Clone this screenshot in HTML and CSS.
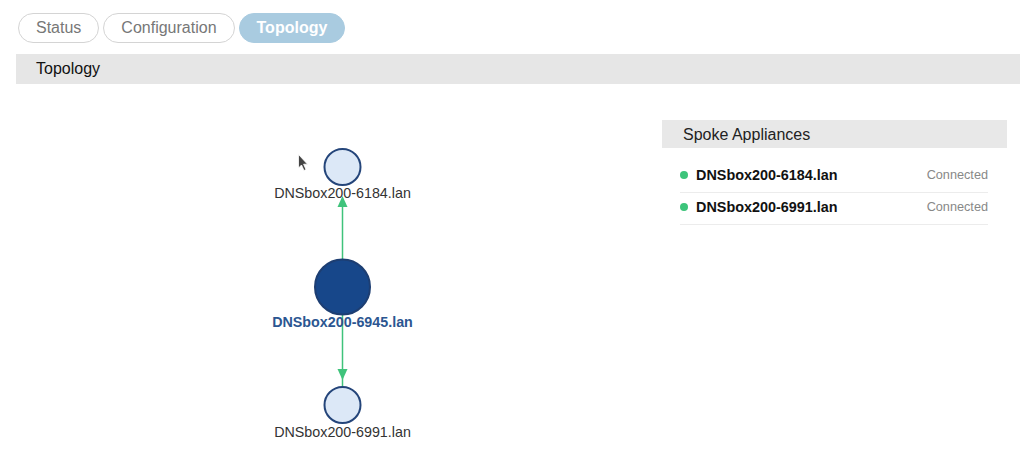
FILE: index.html
```
<!DOCTYPE html>
<html>
<head>
<meta charset="utf-8">
<title>Topology</title>
<link rel="stylesheet" href="styles.css">
</head>
<body>
<div class="page">
  <nav class="tabs">
    <span class="tab">Status</span>
    <span class="tab">Configuration</span>
    <span class="tab active">Topology</span>
  </nav>
  <div class="section-title">Topology</div>
  <div class="content">
    <div class="graph">
      <svg class="graph-svg" width="646" height="373" viewBox="0 0 646 373" xmlns="http://www.w3.org/2000/svg">
        <g class="edges">
          <line x1="326.5" y1="176" x2="326.5" y2="122" class="edge"/>
          <polygon points="326.5,112 321.5,123 331.5,123" class="arrow"/>
          <line x1="326.5" y1="230" x2="326.5" y2="302" class="edge"/>
          <polygon points="326.5,296 321.5,285 331.5,285" class="arrow"/>
        </g>
        <circle cx="326.5" cy="83" r="18" class="node"/>
        <text x="326.5" y="114" class="label">DNSbox200-6184.lan</text>
        <circle cx="326.5" cy="203" r="27.5" class="node hub"/>
        <text x="326.5" y="243" class="label hub-label">DNSbox200-6945.lan</text>
        <circle cx="326.5" cy="321" r="18" class="node"/>
        <text x="326.5" y="353" class="label">DNSbox200-6991.lan</text>
        <path class="cursor" d="M282.5 70.5 L282.5 84 L285.5 81 L288 86.5 L290 85.6 L287.6 80.2 L291.5 80.2 Z"/>
      </svg>
    </div>
    <aside class="spoke">
      <div class="spoke-title">Spoke Appliances</div>
      <ul class="spoke-list">
        <li class="spoke-row"><span class="dot"></span><span class="name">DNSbox200-6184.lan</span><span class="state">Connected</span></li>
        <li class="spoke-row"><span class="dot"></span><span class="name">DNSbox200-6991.lan</span><span class="state">Connected</span></li>
      </ul>
    </aside>
  </div>
</div>
</body>
</html>
```
FILE: styles.css
```
html, body {
  margin: 0;
  padding: 0;
  background: #ffffff;
}
body {
  font-family: "Liberation Sans", Arial, sans-serif;
  color: #222;
}
.page {
  padding: 13px 4px 0 16px;
}
.tabs {
  display: flex;
  gap: 4px;
  margin-left: 2px;
  margin-bottom: 11px;
}
.tab {
  box-sizing: border-box;
  height: 30px;
  line-height: 28px;
  padding: 0 17px;
  border: 1px solid #d4d4d4;
  border-radius: 15px;
  font-size: 16px;
  color: #777;
  background: #fff;
}
.tab.active {
  background: #a9cbe0;
  border-color: #a9cbe0;
  color: #fff;
  font-weight: bold;
}
.section-title {
  height: 30px;
  line-height: 30px;
  padding-left: 20px;
  background: #e6e6e6;
  font-size: 16px;
  color: #111;
}
.content {
  display: flex;
}
.graph {
  width: 646px;
  flex: none;
}
.graph-svg {
  display: block;
}
.edge {
  stroke: #3fc37b;
  stroke-width: 1.5;
}
.arrow {
  fill: #3fc37b;
}
.node {
  fill: #dce8f7;
  stroke: #24457a;
  stroke-width: 2;
}
.node.hub {
  fill: #17478a;
  stroke: #1d3e72;
}
.label {
  font-family: "Liberation Sans", Arial, sans-serif;
  font-size: 14.3px;
  fill: #333;
  text-anchor: middle;
}
.hub-label {
  font-weight: bold;
  fill: #2b5691;
}
.cursor {
  fill: #444;
  stroke: #fff;
  stroke-width: 0.8;
}
.spoke {
  width: 345px;
  flex: none;
  margin-top: 36px;
}
.spoke-title {
  height: 28px;
  line-height: 29px;
  padding-left: 21px;
  background: #e8e8e8;
  font-size: 16px;
  color: #222;
}
.spoke-list {
  list-style: none;
  margin: 13px 19px 0 18px;
  padding: 0 0 0 0;
}
.spoke-row {
  box-sizing: border-box;
  display: flex;
  align-items: center;
  height: 32px;
  padding-bottom: 3px;
  border-bottom: 1px solid #ececec;
}
.dot {
  width: 8px;
  height: 8px;
  border-radius: 50%;
  background: #3cc47a;
  margin: 0 8px 0 0;
  flex: none;
}
.name {
  font-size: 14.4px;
  font-weight: bold;
  color: #111;
  flex: 1;
}
.state {
  font-size: 12.7px;
  color: #888;
}
```
